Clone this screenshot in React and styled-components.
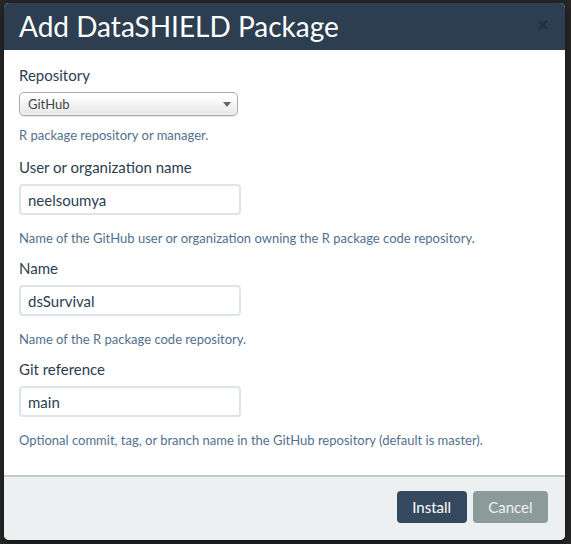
import React from "react";
import styled, { createGlobalStyle } from "styled-components";

const GlobalStyle = createGlobalStyle`
  html, body {
    margin: 0;
    padding: 0;
    background: #272727;
  }
  body {
    font-family: Lato, "Open Sans", sans-serif;
    color: #2c3e50;
  }
  * {
    box-sizing: border-box;
  }
`;

const fields = [
  {
    label: "User or organization name",
    value: "neelsoumya",
    help: "Name of the GitHub user or organization owning the R package code repository.",
  },
  {
    label: "Name",
    value: "dsSurvival",
    help: "Name of the R package code repository.",
  },
  {
    label: "Git reference",
    value: "main",
    help: "Optional commit, tag, or branch name in the GitHub repository (default is master).",
  },
];

export default function App() {
  return (
    <>
      <GlobalStyle />
      <Backdrop>
        <Modal>
          <Header>
            <Title>Add DataSHIELD Package</Title>
            <Close>×</Close>
          </Header>
          <Body>
            <Group $bottom={13}>
              <Label>Repository</Label>
              <Select>
                <span>GitHub</span>
                <Caret />
              </Select>
              <Help $top={10}>R package repository or manager.</Help>
            </Group>
            {fields.map(f => (
              <Group key={f.label} $bottom={11}>
                <Label>{f.label}</Label>
                <Input defaultValue={f.value} />
                <Help $top={14}>{f.help}</Help>
              </Group>
            ))}
          </Body>
          <Footer>
            <Button $primary>Install</Button>
            <Button>Cancel</Button>
          </Footer>
        </Modal>
      </Backdrop>
    </>
  );
}

const Backdrop = styled.div`
  width: 571px;
  height: 544px;
  padding: 3px 6px 4px 4px;
  background: #272727;
`;

const Modal = styled.div`
  width: 561px;
  height: 537px;
  background: #fff;
  border-radius: 5px;
  overflow: hidden;
  display: flex;
  flex-direction: column;
  box-shadow: 0 3px 9px rgba(0, 0, 0, 0.5);
`;

const Header = styled.div`
  height: 47px;
  background: #2c3e50;
  display: flex;
  align-items: center;
  justify-content: space-between;
  padding: 0 16px 0 15px;
`;

const Title = styled.h4`
  margin: 0;
  font-size: 28px;
  font-weight: 400;
  color: #fff;
  line-height: 1;
  margin-top: -1px;
`;

const Close = styled.span`
  font-size: 21px;
  font-weight: 700;
  color: #000;
  opacity: 0.2;
  line-height: 1;
  margin-top: -7px;
`;

const Body = styled.div`
  flex: 1;
  padding: 15px 15px 0;
`;

const Group = styled.div`
  margin-bottom: ${p => p.$bottom}px;
`;

const Label = styled.label`
  display: block;
  font-size: 15px;
  line-height: 21px;
  margin-bottom: 6px;
  color: #2c3e50;
`;

const Select = styled.div`
  width: 219px;
  height: 24px;
  border: 1px solid #aaa;
  border-radius: 5px;
  background: linear-gradient(to bottom, #fff 20%, #f4f4f4 50%, #e6e6e6 100%);
  box-shadow: 0 0 3px #fff inset, 0 1px 1px rgba(0, 0, 0, 0.1);
  display: flex;
  align-items: center;
  justify-content: space-between;
  padding: 0 6px 0 8px;
  font-size: 13px;
  color: #444;
`;

const Caret = styled.span`
  width: 0;
  height: 0;
  border-left: 4px solid transparent;
  border-right: 4px solid transparent;
  border-top: 5px solid #666;
  margin-top: 1px;
`;

const Input = styled.input`
  display: block;
  width: 222px;
  height: 31px;
  border: 2px solid #dce4ec;
  border-radius: 4px;
  padding: 0 7px;
  font-family: Lato, "Open Sans", sans-serif;
  font-size: 15px;
  color: #2c3e50;
  outline: none;
`;

const Help = styled.p`
  margin: ${p => p.$top}px 0 0;
  font-size: 13px;
  line-height: 18px;
  color: #52708f;
`;

const Footer = styled.div`
  border-top: 2px solid #c3c8cb;
  background: #ecf0f1;
  height: 65px;
  display: flex;
  justify-content: flex-end;
  align-items: flex-start;
  gap: 6px;
  padding: 14px 17px 0 0;
`;

const Button = styled.button`
  height: 32px;
  padding: 0 15.5px;
  border: 0;
  border-radius: 4px;
  font-family: Lato, "Open Sans", sans-serif;
  font-size: 15px;
  color: ${p => (p.$primary ? "#fff" : "#eef2f2")};
  background: ${p => (p.$primary ? "#34495e" : "#8c9a99")};
`;
